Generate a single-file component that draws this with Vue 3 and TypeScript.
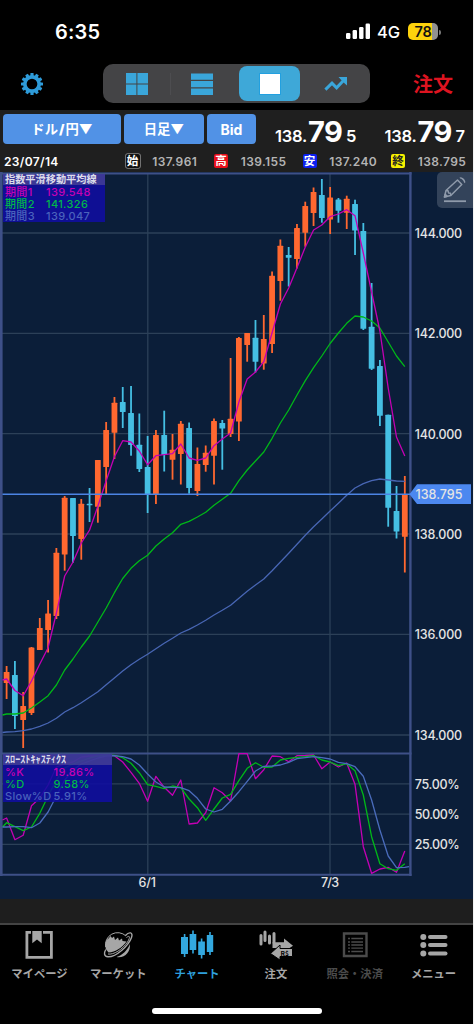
<script setup lang="ts">
const STEP = 8.296
const xAt = (i: number): number => 6.6 + i * STEP

// [direction, high, body top, body bottom, low]; direction 1 = up, 0 = down
type Candle = [number, number, number, number, number]
const candles: Candle[] = [
  [1, 666, 672, 683, 699], [0, 661, 675, 716, 729], [1, 692, 706, 720, 748], [1, 647, 647.5, 713, 715],
  [1, 618, 628, 650, 650], [1, 600, 613.5, 630, 652.5], [1, 548, 552.7, 616, 619], [1, 496, 497.7, 554.5, 570.7],
  [0, 498, 498, 536, 562.7], [1, 499, 503.7, 539, 559.7], [0, 488, 503.7, 505.3, 522], [1, 460, 460, 506.7, 522.7],
  [1, 422, 430, 467, 494], [1, 397, 402.7, 432.7, 459], [0, 387, 402, 412, 428], [0, 386, 413, 445, 455.7],
  [0, 413.5, 444.7, 469, 472], [0, 436, 467, 494, 513], [1, 430, 435, 494, 504], [0, 410.7, 435, 455, 471.5],
  [1, 434, 449.7, 459.7, 479.7], [1, 421, 423.7, 454, 484.5], [0, 422.5, 428, 488, 493.7], [1, 447.5, 464, 491, 496],
  [1, 445.5, 452.7, 465, 471.7], [1, 418.5, 421, 455.7, 484.5], [0, 420, 423, 428.5, 469.7], [1, 358, 418.7, 434, 437],
  [1, 337, 338, 421.5, 441], [1, 333, 333, 345, 361.7], [0, 320, 337.7, 361.7, 372.5], [1, 315, 339, 363.5, 369.7],
  [1, 271.5, 275.7, 344, 353], [1, 239.5, 245.7, 281, 300.7], [0, 247, 255, 257.7, 286.5], [1, 224, 228, 259, 268.5],
  [1, 201.7, 206, 232.7, 246.7], [1, 187.5, 192, 213, 226], [0, 179, 195, 218, 222.7], [1, 187, 197.5, 219.5, 234],
  [0, 198, 199.5, 210.7, 222.7], [1, 195.7, 198.7, 212.7, 229], [0, 199.7, 204, 230.5, 255], [0, 223, 231, 328.7, 330],
  [0, 283, 326.7, 368.7, 370], [0, 360, 366, 415.7, 426], [0, 414.7, 414.7, 507.7, 526.7], [0, 486, 511, 531.5, 538.5],
  [1, 476, 494, 536.7, 572.5],
]

const ema1 = [679, 690.5, 695.7, 681, 664, 647.7, 613, 576, 562, 543, 530, 506, 480.7, 456.7, 440.7, 442, 451, 464.7, 455.7, 454.7, 453.7, 444, 458, 460.3, 458, 445.7, 439, 433, 402, 379, 372, 361.7, 332.7, 304, 288, 267.7, 247, 230, 225, 216.7, 214, 209.7, 215.7, 253, 292, 331, 388, 437, 456]
const ema2 = [714, 714, 713, 708, 702, 695.7, 685, 670, 659, 647, 636, 622, 608, 592.7, 578.5, 568.3, 560.7, 555.3, 546, 539, 532.7, 524.3, 521.3, 517, 512.3, 505.3, 499.3, 493.3, 480.7, 470, 461, 452, 438.3, 423, 410, 395, 380.7, 367.7, 356, 343.5, 333, 323.3, 316, 317, 321, 328, 342, 356, 366.7]
const ema3 = [732, 731.7, 730.7, 729, 726.3, 723, 718.3, 712, 707.7, 702.7, 697.3, 691.7, 684.7, 678, 671, 664.7, 659.3, 654.3, 648.7, 643.3, 638.3, 633, 629.3, 625, 620.3, 615, 610.3, 605.3, 598.3, 591.3, 585, 579, 570.7, 562, 553.3, 544.3, 535.3, 526.7, 519, 511, 503.3, 495.3, 488, 483.7, 480.7, 479, 480, 481, 481.3]
const stochK = [818, 839.7, 835.3, 805.7, 798, 785, 767, 764, 762, 757, 756, 756, 755, 755.7, 762, 772.3, 783.3, 801.3, 776.3, 787.3, 795.3, 780, 824, 823, 812.7, 787.7, 792.7, 801, 753.7, 753.7, 778.7, 769.7, 756, 756.7, 761.7, 755.7, 755.5, 755, 768.7, 762, 767, 763, 784.3, 846.7, 873.3, 869, 867.3, 872.3, 851]
const stochD = [822.7, 826.7, 830.7, 827, 813.3, 796, 780, 768, 764, 761, 758, 756, 755, 755.3, 757.7, 763.3, 772.7, 784.7, 786.3, 788.7, 786, 787.7, 799, 807.7, 820.3, 809, 798, 794.3, 780.7, 768.3, 762.7, 767.3, 767, 760, 758.3, 757.3, 756.7, 755.7, 760, 762, 765.7, 763.7, 770.7, 795, 836.7, 863.7, 868.7, 870.3, 863.7]
const stochS = [827, 826.7, 826.7, 827.7, 823, 812, 796, 780, 770, 764, 761, 758, 756, 755.7, 756.7, 759, 765, 774, 782, 787, 787.3, 787.7, 790.7, 798.3, 809, 812, 809.3, 801, 791.7, 781.3, 771, 766.3, 766, 765, 762.3, 758.7, 757.7, 756.7, 757.7, 759, 762.3, 763.7, 766.7, 776.3, 800, 830, 856, 867.7, 867.3]

const line = (ys: number[], start: number): string =>
  `2.5,${start} ` + ys.map((y, i) => `${xAt(i).toFixed(1)},${y}`).join(' ')

const priceTicks = [
  { y: 233, label: '144.000' }, { y: 333.3, label: '142.000' }, { y: 433.7, label: '140.000' },
  { y: 534, label: '138.000' }, { y: 634.4, label: '136.000' }, { y: 735, label: '134.000' },
]
const pctTicks = [
  { y: 783.8, label: '75.00%' }, { y: 814.1, label: '50.00%' }, { y: 844.4, label: '25.00%' },
]
const quotes = [
  { tag: '始', kind: 'open', value: '137.961' },
  { tag: '高', kind: 'high', value: '139.155' },
  { tag: '安', kind: 'low', value: '137.240' },
  { tag: '終', kind: 'close', value: '138.795' },
]
const teeth = Array.from({ length: 12 }, (_, i) => i * 30)
</script>

<template>
  <div class="screen">
    <div class="status">
      <span class="time">6:35</span>
      <svg class="signal" width="25" height="16" viewBox="0 0 25 16" fill="#fff">
        <rect x="0" y="10" width="4.4" height="6" rx="1.2" />
        <rect x="6.6" y="7" width="4.4" height="9" rx="1.2" />
        <rect x="13.1" y="4" width="4.4" height="12" rx="1.2" />
        <rect x="19.6" y="0.5" width="4.4" height="15.5" rx="1.2" />
      </svg>
      <span class="net">4G</span>
      <div class="battery"><span>78</span></div>
      <i class="cap"></i>
    </div>

    <div class="toolbar">
      <svg class="gear" width="24" height="24" viewBox="-12 -12 24 24">
        <rect v-for="a in teeth" :key="a" x="-1.6" y="-11" width="3.2" height="4" rx=".6" fill="#2e9bd9" :transform="`rotate(${a})`" />
        <circle r="7.2" fill="none" stroke="#2e9bd9" stroke-width="3.7" />
      </svg>
      <div class="segments">
        <div class="seg">
          <svg width="22" height="22" viewBox="0 0 22 22" fill="#3aa6da"><path d="M0 0h10.4v10.4H0zM11.4 0H22v10.4H11.4zM0 11.4h10.4V22H0zM11.4 11.4H22V22H11.4z" /></svg>
        </div>
        <i class="divider"></i>
        <div class="seg">
          <svg width="22" height="22" viewBox="0 0 22 22" fill="#3aa6da"><path d="M0 0.5h22v6.3H0zM0 8h22v6.3H0zM0 15.5h22V22H0z" /></svg>
        </div>
        <div class="seg active"><i class="square"></i></div>
        <div class="seg">
          <svg width="24" height="16" viewBox="0 0 24 16" fill="none" stroke="#3aa6da" stroke-width="3"><path d="M1.4 13.6 8 7.2l4.6 4.6 7.4-7.8" /><path d="M14.5 1H23v8.4l-2.5-2.2L16.8 3.500z" fill="#3aa6da" stroke="none" /></svg>
        </div>
      </div>
      <span class="order">注文</span>
    </div>

    <div class="rates">
      <button class="pair">ドル<b>/</b>円▼</button>
      <button class="term">日足▼</button>
      <button class="side">Bid</button>
      <div class="price bid"><small>138.</small><strong>79</strong><em>5</em></div>
      <div class="price ask"><small>138.</small><strong>79</strong><em>7</em></div>
    </div>

    <div class="ohlc">
      <span class="date">23/07/14</span>
      <div v-for="q in quotes" :key="q.kind" class="quote">
        <span class="tag" :class="q.kind">{{ q.tag }}</span><span class="val">{{ q.value }}</span>
      </div>
    </div>

    <div class="chart">
      <svg class="plot" width="473" height="727" viewBox="0 172 473 727">
        <g stroke="#2c4058" stroke-width="1.3">
          <path v-for="t in priceTicks" :key="t.label" :d="`M2 ${t.y}H410`" />
          <path v-for="t in pctTicks" :key="t.label" :d="`M2 ${t.y}H410`" />
          <path d="M147.8 174V875M330 174V875" />
        </g>
        <g fill="none" stroke="#3e5088">
          <path d="M1.3 172V876" stroke-width="2.6" />
          <path d="M410.400 172V876" stroke-width="2.4" />
          <path d="M0 173.500H411.500M0 753.600H411.500M0 874.800H411.500" stroke-width="2" />
        </g>
        <g v-for="(c, i) in candles" :key="i" :fill="c[0] ? '#ff6830' : '#45bfe3'">
          <rect :x="xAt(i) - 0.9" :y="c[1]" width="1.8" :height="c[4] - c[1]" />
          <rect :x="xAt(i) - 2.9" :y="c[2]" width="5.8" :height="c[3] - c[2]" rx=".5" />
        </g>
        <g fill="none" stroke-width="1.3" stroke-linejoin="round">
          <polyline :points="line(ema3, 732.5)" stroke="#4866b4" />
          <polyline :points="line(ema2, 715)" stroke="#00b818" />
          <polyline :points="line(ema1, 680)" stroke="#c400b4" />
          <polyline :points="line(stochK, 820)" stroke="#c400b4" />
          <polyline :points="line(stochD, 827)" stroke="#00b818" />
          <polyline :points="line(stochS, 827) + ' 409,866.7'" stroke="#4a6cbc" />
        </g>
        <path d="M2.500 494.200H411" stroke="#4c84e4" stroke-width="1.5" />
        <path d="M409.500 494.300 417 484.300H471V504H417z" fill="#4c88f0" />
        <g class="axis">
          <text v-for="t in priceTicks" :key="t.label" x="414.700" :y="t.y + 5" textLength="47.500">{{ t.label }}</text>
          <text v-for="t in pctTicks" :key="t.label" x="414.700" :y="t.y + 5" textLength="45">{{ t.label }}</text>
          <text x="415.500" y="499" textLength="47">138.795</text>
          <text x="138.500" y="886.500" textLength="17.500">6/1</text>
          <text x="321" y="886.500" textLength="18">7/3</text>
        </g>
      </svg>

      <div class="legend trend">
        <div class="head">指数平滑移動平均線</div>
        <div class="row c1"><span>期間1</span><span>139.548</span></div>
        <div class="row c2"><span>期間2</span><span>141.326</span></div>
        <div class="row c3"><span>期間3</span><span>139.047</span></div>
      </div>
      <div class="legend stoch">
        <div class="head">ｽﾛｰｽﾄｷｬｽﾃｨｸｽ</div>
        <div class="row c1"><span>%K</span><span>19.86%</span></div>
        <div class="row c2"><span>%D</span><span>9.58%</span></div>
        <div class="row c3"><span>Slow%D</span><span>5.91%</span></div>
      </div>
      <div class="draw">
        <svg width="24" height="28" viewBox="0 0 24 28" fill="none" stroke="#8f9aaa" stroke-width="1.500" stroke-linejoin="round">
          <path d="M1.500 21 3 14.500 14.500 4 18.800 8.500 7.800 19.500z" />
          <path d="M3 14.500 5 14.800 5.600 17 7.500 17.300 7.800 19.500M17 2.300c1.200-1.500 5.800 3 4.300 4.300" />
          <path d="M1.500 21 2.200 18.200 4.200 20.300z" fill="#8f9aaa" />
          <path d="M1 25.200H23" stroke-width="1.800" />
        </svg>
      </div>
    </div>

    <nav class="tabs">
      <div class="tab">
        <svg width="34" height="30" viewBox="0 0 34 30">
          <path d="M4.900 2.400H29.400V27.400H4.900z" fill="none" stroke="#a6a6a6" stroke-width="2.800" />
          <path d="M9 0H21V5H9z" fill="#000" /><path d="M10.300 1H19.700V13.200L15 9.500 10.300 13.200z" fill="#a6a6a6" />
        </svg>
        <span>マイページ</span>
      </div>
      <div class="tab">
        <svg width="34" height="30" viewBox="0 0 34 30">
          <path d="M4.600 17A12.200 12.200 0 0 1 25 6" fill="none" stroke="#a6a6a6" stroke-width="1" />
          <path d="M4.800 19C4 13 5 9.500 7.500 8.500L9.500 6 11 8 13 6.500 14 10 17 7.500 18 10.500 21 8.500 21.500 11 25.500 11.500C22 17 14 22.500 7.500 22.500z" fill="#a6a6a6" />
          <path d="M15.500 27C21 25.500 27 20 28.800 14 30 22 23.500 28.500 15.500 27z" fill="#a6a6a6" />
          <path d="M24.500 5.500C28 1.500 32.500 2 30.500 7.500 27.500 16 15 27 7 26.800 2.500 26.500 3 22.500 4.800 19.500" fill="none" stroke="#a6a6a6" stroke-width="1.400" />
          <path d="M25.500 7.500C29.500 4.500 29 8 26.500 12 21.500 19.500 12.500 25 7 24" fill="none" stroke="#a6a6a6" stroke-width="1" />
        </svg>
        <span>マーケット</span>
      </div>
      <div class="tab on">
        <svg width="34" height="30" viewBox="0 0 34 30" fill="#33a8df">
          <path d="M1 7h7v17H1zM9.600 4h6.700v16H9.600zM18.200 11.500h6.700V25h-6.700zM26.800 5h6.400v17h-6.400z" />
          <path d="M3.800 4h1.600v23H3.800zM12.200 .5h1.600v23h-1.600zM20.800 8.500h1.600v20h-1.600zM29.200 2h1.600v23h-1.600z" />
        </svg>
        <span>チャート</span>
      </div>
      <div class="tab">
        <svg width="34" height="30" viewBox="0 0 34 30">
          <path d="M2 5.500v8.500M6 2v8.500M10.500 6v7M15 3.500v9" stroke="#a6a6a6" stroke-width="3" stroke-linecap="round" />
          <path d="M13.500 12.200h11.500V8.500l9 7.300-9 6V18H13.500z" fill="#a6a6a6" />
          <path d="M21 18.500V15l-9.500 8.500 9.500 6.500v-3.500h12.500v-8z" fill="#a6a6a6" stroke="#000" stroke-width="1" />
          <text x="21.500" y="25.800" font-size="6.500" font-weight="700" fill="#000">R$</text>
        </svg>
        <span>注文</span>
      </div>
      <div class="tab off">
        <svg width="34" height="30" viewBox="0 0 34 30" fill="none" stroke="#4b4b4b">
          <path d="M6 3.500H28.500V26H6z" stroke-width="2.400" />
          <path d="M10 8.500h2M13.300 8.500H25M10 12h2M13.300 12H25M10 15h2M13.300 15H25M10 18.200h2M13.300 18.200H25M10 21.500h2M13.300 21.500H25" stroke-width="1.300" />
        </svg>
        <span>照会・決済</span>
      </div>
      <div class="tab">
        <svg width="34" height="30" viewBox="0 0 34 30" fill="#a6a6a6">
          <circle cx="6.300" cy="7" r="3" /><circle cx="6.300" cy="15" r="3" /><circle cx="6.300" cy="23.500" r="3" />
          <rect x="11" y="4.900" width="19.500" height="4.200" rx="2" /><rect x="11" y="12.900" width="19.500" height="4.200" rx="2" /><rect x="11" y="21.400" width="19.500" height="4.200" rx="2" />
        </svg>
        <span>メニュー</span>
      </div>
    </nav>
    <i class="home"></i>
  </div>
</template>

<style>
body { margin: 0; background: #f2f2f2; }
</style>

<style scoped>
.screen { width: 473px; height: 1024px; background: #000; color: #fff; overflow: hidden; display: flex; flex-direction: column; box-sizing: border-box; font-family: Inter, "Noto Sans CJK JP", sans-serif; }
.status { height: 58px; padding-top: 6px; display: flex; align-items: center; box-sizing: border-box; flex: none; }
.time { margin-left: 55px; width: 291px; font-size: 20px; font-weight: 600; letter-spacing: .2px; }
.signal { flex: none; margin-top: -2px; }
.net { margin-left: 6px; width: 25px; font-size: 16.5px; font-weight: 500; letter-spacing: -.2px; }
.battery { margin-left: 6px; width: 30px; height: 17px; margin-top: -1px; border-radius: 5px; background: linear-gradient(90deg, #fdd20c 24px, #919191 24px); display: flex; align-items: center; justify-content: center; color: #111; font-size: 14.5px; font-weight: 600; letter-spacing: -.2px; }
.cap { width: 2px; height: 5px; margin-left: 1px; background: #777; border-radius: 0 2px 2px 0; }
.toolbar { height: 52px; padding-bottom: 1px; box-sizing: border-box; display: flex; align-items: center; flex: none; }
.gear { margin-left: 20px; flex: none; }
.segments { margin-left: 59px; width: 267px; height: 39px; border-radius: 10px; background: #444446; display: flex; align-items: center; padding: 0 2px; box-sizing: border-box; }
.seg { flex: 1; height: 35px; display: flex; align-items: center; justify-content: center; }
.divider { width: 1px; height: 22px; background: #4d4d50; margin: 0 -1px 0 0; }
.seg.active { flex: 0 0 61px; margin: 0 3px 0 5px; border-radius: 8px; background: #3ea8d8; }
.square { width: 22px; height: 22px; background: #fff; border: 1px solid #22a0e0; box-sizing: border-box; }
.order { margin-left: 43px; font-size: 20px; font-weight: 700; color: #dd1420; line-height: 26px; font-family: "Noto Sans CJK JP", sans-serif; }
.rates { height: 40px; background: #1f1f1f; display: flex; padding: 4px 0 0 3px; box-sizing: border-box; flex: none; }
.rates button { height: 30px; padding: 0; border: 0; border-radius: 4px; background: #5192e6; color: #fff; font: 700 13.300px/29px Inter, "Noto Sans CJK JP", sans-serif; margin-right: 3px; flex: none; }
.rates b { margin: 0 1px; }
.rates .pair { width: 118px; }
.rates .term { width: 80px; }
.rates .side { width: 49px; font-size: 14px; }
.price { display: flex; align-items: baseline; line-height: 35px; height: 36px; font-weight: 600; white-space: nowrap; }
.bid { margin-left: 16px; width: 109.500px; }
.price small { font-size: 16.500px; width: 33px; letter-spacing: -.2px; }
.price strong { font-size: 29px; font-weight: 700; width: 38px; letter-spacing: -.6px; }
.price em { font-style: normal; font-size: 16.500px; }
.ohlc { height: 22px; background: #1f1f1f; display: flex; align-items: center; font-size: 12px; font-weight: 600; flex: none; }
.date { width: 121px; flex: none; padding-left: 4px; letter-spacing: .35px; box-sizing: border-box; margin-right: 4.500px; }
.quote { display: flex; align-items: center; width: 88.500px; flex: none; }
.tag { width: 14px; height: 14px; flex: none; border-radius: 2px; font: 700 11.500px/13px "Noto Sans CJK JP", sans-serif; text-align: center; margin-right: 12.700px; }
.open { background: #111; box-shadow: 0 0 0 .8px #888; }
.high { background: #e8101c; }
.low { background: #0c20f0; }
.close { background: #f6f000; color: #222; }
.val { color: #b4b4b4; font-size: 12px; letter-spacing: .4px; }
.chart { position: relative; height: 727px; background: #0b1e39; flex: none; }
.plot { display: block; }
.axis { font: 500 12.500px Inter, sans-serif; fill: #e4e4e4; }
.legend { position: absolute; left: 3px; background: rgba(16, 14, 160, .88); font-size: 11px; font-weight: 500; }
.trend { top: 2px; width: 101.500px; height: 48px; }
.stoch { top: 582px; width: 109px; height: 48px; }
.head { height: 11px; background: rgba(88, 82, 150, .6); font: 700 10.200px/10px "Noto Sans CJK JP", sans-serif; color: #dcdcea; padding-left: 2px; white-space: nowrap; }
.row { height: 12.200px; line-height: 14px; padding-left: 2px; display: flex; letter-spacing: .35px; }
.row span:first-child { width: 41px; }
.stoch .row span:first-child { width: 48.500px; }
.c1 { color: #c400b4; }
.c2 { color: #00b84a; }
.c3 { color: #4a62bc; }
.draw { position: absolute; right: 0; top: 0; width: 36px; height: 36px; border-radius: 5px 0 0 5px; background: #33435a; display: flex; align-items: center; justify-content: center; }
.tabs { margin-top: 24px; height: 62px; border-top: 2px solid #444; display: flex; background: #000; box-shadow: 0 -24px 0 #1e1e1e; flex: none; }
.tab { flex: 1; display: flex; flex-direction: column; align-items: center; padding-top: 5px; font: 700 11.300px/16px "Noto Sans CJK JP", sans-serif; color: #a6a6a6; white-space: nowrap; }
.tab svg { flex: none; margin-bottom: 5px; }
.tab.on { color: #2e9fdc; }
.tab.off { color: #4b4b4b; }
.home { width: 170px; height: 6px; border-radius: 3px; background: #fff; margin: 21px 0 0 152px; flex: none; }
</style>
